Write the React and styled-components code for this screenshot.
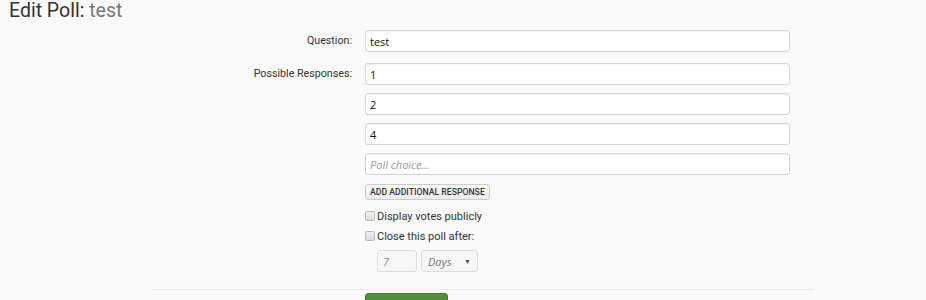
import styled, { createGlobalStyle } from "styled-components";

const GlobalStyle = createGlobalStyle`
  html, body {
    margin: 0;
    padding: 0;
    background: #fafafb;
    font-family: Roboto, "Liberation Sans", Arial, sans-serif;
    color: #333;
  }
`;

const Page = styled.div`
  padding: 0 9px;
  height: 300px;
  overflow: hidden;
`;

const Title = styled.h1`
  margin: 0;
  font-size: 19.5px;
  font-weight: 400;
  line-height: 22px;
  color: #333;
  & span {
    color: #777;
  }
`;

const FormBlock = styled.form`
  width: 662px;
  margin: 8px 0 0 143px;
`;

const Row = styled.div`
  display: grid;
  grid-template-columns: 200px 425px;
  column-gap: 13px;
  margin-bottom: ${(p) => p.$gap ?? 8}px;
`;

const Label = styled.label`
  text-align: right;
  font-size: 10.7px;
  line-height: 22px;
  color: #333;
`;

const Stack = styled.div`
  display: flex;
  flex-direction: column;
  gap: 8px;
`;

const TextInput = styled.input`
  box-sizing: border-box;
  width: 100%;
  height: 22px;
  padding: 0 4px;
  border: 1px solid #d4d4d4;
  border-radius: 3px;
  background: #fff;
  box-shadow: inset 0 1px 1px rgba(0, 0, 0, 0.05);
  font-family: "Open Sans", "Liberation Sans", sans-serif;
  font-size: 11px;
  color: #111;
  outline: none;
  &::placeholder {
    color: #999;
    font-style: italic;
  }
`;

const SmallButton = styled.button`
  align-self: flex-start;
  height: 16px;
  padding: 0 4px;
  margin-top: 1px;
  border: 1px solid #ccc;
  border-radius: 3px;
  background: linear-gradient(#fdfdfd, #ececec);
  font-family: Roboto, "Liberation Sans", sans-serif;
  font-size: 8.7px;
  font-weight: 500;
  color: #333;
  text-transform: uppercase;
  line-height: 14px;
`;

const Options = styled.div`
  display: flex;
  flex-direction: column;
  gap: 4px;
  margin-top: 1px;
`;

const Check = styled.label`
  display: flex;
  align-items: center;
  gap: 2px;
  font-size: 11px;
  line-height: 16px;
  color: #333;
  & input {
    appearance: none;
    margin: 0 0 2px 0;
    width: 10px;
    height: 10px;
    border: 1px solid #bbb;
    border-radius: 2px;
    background: linear-gradient(#f2f2f2, #dcdcdc);
  }
`;

const Timer = styled.div`
  display: flex;
  gap: 4px;
  margin: 5px 0 0 12px;
`;

const NumberBox = styled.input`
  box-sizing: border-box;
  width: 40px;
  height: 22px;
  padding: 0 5px;
  border: 1px solid #ddd;
  border-radius: 3px;
  background: #f6f6f6;
  font-family: "Open Sans", "Liberation Sans", sans-serif;
  font-style: italic;
  font-size: 11px;
  color: #888;
  outline: none;
`;

const Select = styled.div`
  box-sizing: border-box;
  width: 57px;
  height: 22px;
  padding: 0 6px;
  display: flex;
  align-items: center;
  justify-content: space-between;
  border: 1px solid #ddd;
  border-radius: 3px;
  background: #f6f6f6;
  font-family: "Open Sans", "Liberation Sans", sans-serif;
  font-style: italic;
  font-size: 11px;
  color: #777;
  & b {
    font-style: normal;
    font-size: 7px;
    color: #555;
  }
`;

const Rule = styled.hr`
  border: 0;
  border-top: 1px solid #e8e8ea;
  margin: 17px 0 2px 0;
`;

const SaveButton = styled.button`
  margin-left: 213px;
  height: 22px;
  width: 83px;
  padding: 0;
  border: 1px solid #3f7a31;
  border-radius: 3px;
  background: linear-gradient(#55903f, #467f37);
  color: #fff;
  font-family: Roboto, "Liberation Sans", sans-serif;
  font-size: 9px;
  font-weight: 700;
  text-transform: uppercase;
`;

export default function App() {
  return (
    <Page>
      <GlobalStyle />
      <Title>
        Edit Poll: <span>test</span>
      </Title>
      <FormBlock onSubmit={(e) => e.preventDefault()}>
        <Row $gap={11}>
          <Label>Question:</Label>
          <TextInput defaultValue="test" />
        </Row>
        <Row $gap={0}>
          <Label>Possible Responses:</Label>
          <Stack>
            <TextInput defaultValue="1" />
            <TextInput defaultValue="2" />
            <TextInput defaultValue="4" />
            <TextInput placeholder="Poll choice..." />
            <SmallButton type="button">Add additional response</SmallButton>
            <Options>
              <Check>
                <input type="checkbox" /> Display votes publicly
              </Check>
              <Check>
                <input type="checkbox" /> Close this poll after:
              </Check>
            </Options>
          </Stack>
        </Row>
        <Row $gap={0}>
          <span />
          <Timer>
            <NumberBox defaultValue="7" />
            <Select>
              Days <b>▼</b>
            </Select>
          </Timer>
        </Row>
        <Rule />
        <SaveButton>Save changes</SaveButton>
      </FormBlock>
    </Page>
  );
}
